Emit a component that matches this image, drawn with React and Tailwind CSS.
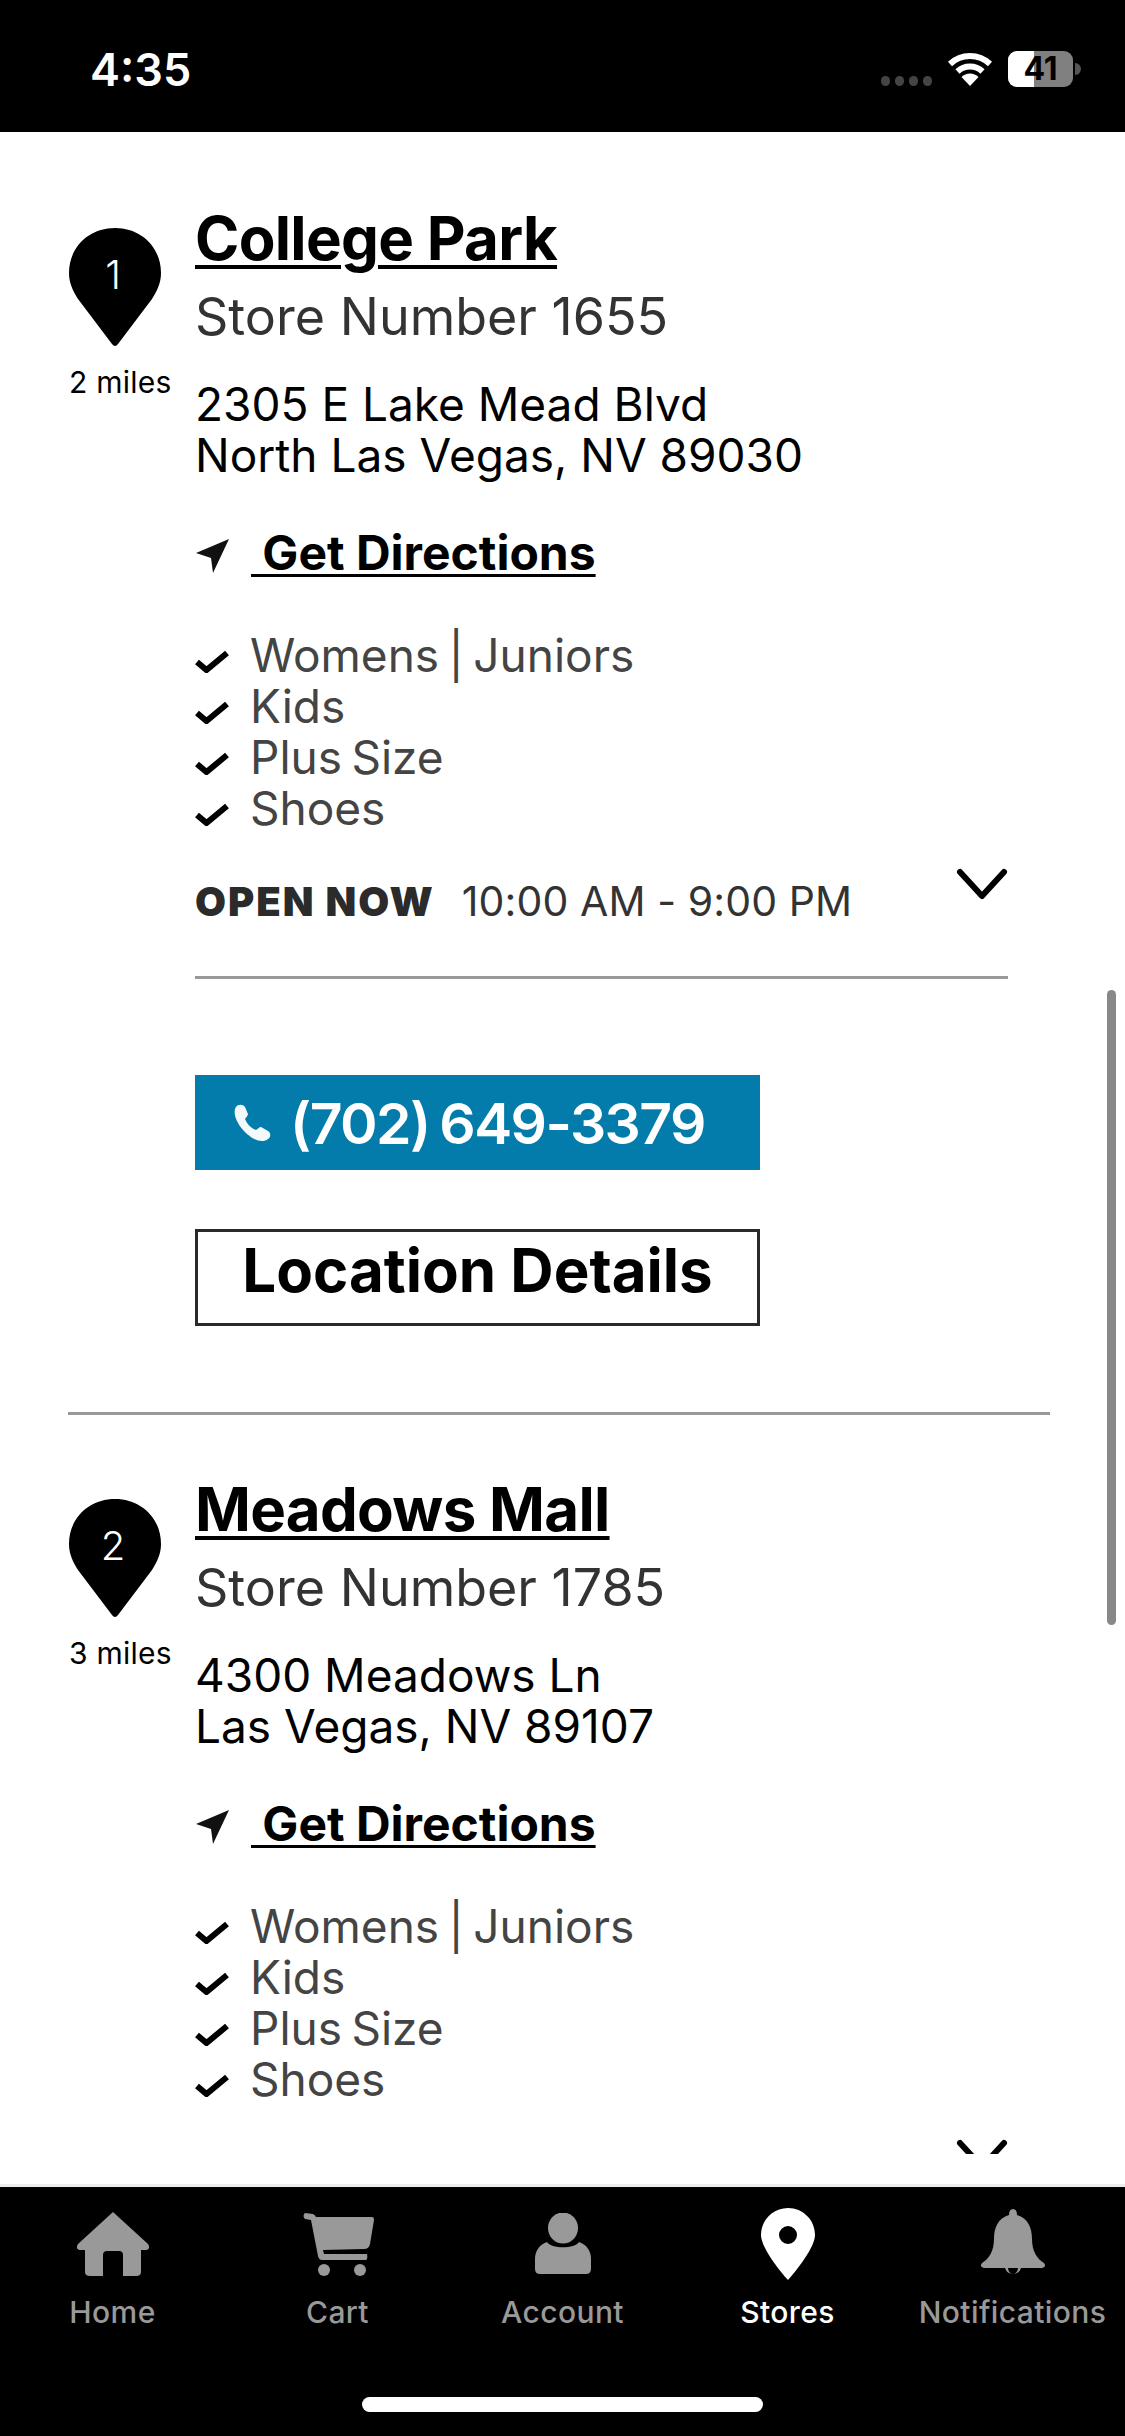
import React from "react";

const features = ["Womens | Juniors", "Kids", "Plus Size", "Shoes"];
const stores = [
  { n: 1, miles: "2 miles", name: "College Park", num: "Store Number 1655", a1: "2305 E Lake Mead Blvd", a2: "North Las Vegas, NV 89030" },
  { n: 2, miles: "3 miles", name: "Meadows Mall", num: "Store Number 1785", a1: "4300 Meadows Ln", a2: "Las Vegas, NV 89107" },
];

function Check() {
  return (
    <svg viewBox="0 0 34 24" className="w-[34px] h-[24px] shrink-0 mt-[8px]">
      <path d="M2 13 L11.5 21 L32 4" fill="none" stroke="#000" strokeWidth="6" />
    </svg>
  );
}

function Store({ s }) {
  return (
    <div className="mb-[62px]">
      <div className="flex">
        <div className="w-[127px] shrink-0 pt-[22px]">
          <div className="relative w-[92px] h-[119px] ml-[1px]">
            <svg viewBox="0 0 92 119" className="w-[92px] h-[119px]">
              <path d="M46 0C72 0 92 19 92 45C92 55 88 63 83 71L49 116Q46 120 43 116L9 71C4 63 0 55 0 45C0 19 20 0 46 0Z" fill="#000" />
            </svg>
            <div className="absolute left-0 right-[4px] top-[23px] text-center text-white text-[40px] leading-[48px] font-light">{s.n}</div>
          </div>
          <div className="mt-[18px] ml-[1px] text-[30px] leading-[34px] tracking-[0.25px] text-black whitespace-nowrap">{s.miles}</div>
        </div>
        <div className="flex-1 min-w-0">
          <div className="-mt-[1px] text-[60px] leading-[66px] font-bold text-black underline decoration-[4px] underline-offset-[5px] tracking-[-0.7px]">{s.name}</div>
          <div className="mt-[17px] text-[52px] leading-[58px] text-[#333]">{s.num}</div>
          <div className="mt-[33px] text-[46px] leading-[51px] text-black">
            <div>{s.a1}</div>
            <div>{s.a2}</div>
          </div>
          <div className="mt-[46px] flex items-center text-[48px] leading-[52px] font-bold text-black">
            <svg viewBox="0 0 34 34" className="w-[34px] h-[34px] shrink-0 ml-[1px] mr-[21px] mt-[6px]">
              <path d="M33 0 L0 14 L15 19 L17 34 Z" fill="#111" />
            </svg>
            <span className="underline decoration-[3px] underline-offset-[4px] whitespace-pre"> Get Directions</span>
          </div>
          <div className="mt-[52px]">
            {features.map((f) => (
              <div key={f} className="flex items-center h-[51px]">
                <Check />
                <span className="ml-[21px] -mt-[3px] text-[46px] leading-[51px] text-[#444] [word-spacing:-3.5px]">{f}</span>
              </div>
            ))}
          </div>
          <div className="mt-[42px] flex items-start justify-between text-[#2b2b2b]">
            <div className="flex items-baseline">
              <span className="font-black text-[40px] leading-[48px] tracking-[2px]">OPEN NOW</span>
              <span className="ml-[27px] text-[41px] leading-[48px] text-[#333] tracking-[0.1px]">10:00 AM - 9:00 PM</span>
            </div>
            <svg viewBox="0 0 56 36" className="w-[56px] h-[36px] -mt-[11px] mr-[-2px] shrink-0">
              <path d="M6 6 L28 30 L50 6" fill="none" stroke="#000" strokeWidth="6" strokeLinecap="round" strokeLinejoin="round" />
            </svg>
          </div>
          <div className="mt-[50px] h-[3px] bg-[#999]" />
          <div className="mt-[96px] w-[565px] h-[95px] bg-[#047cab] flex items-center text-white">
            <svg viewBox="0 0 38 38" className="ml-[38px] w-[38px] h-[38px] shrink-0">
              <path d="M3 3C5 0 10 0 12 3L15 10C15 12 13 13 12 15C14 20 18 24 23 26C25 25 26 23 28 23L35 27C38 29 38 33 35 35C30 39 22 37 14 30C4 21 -1 9 3 3Z" fill="#f4fafc" />
            </svg>
            <span className="ml-[19px] mt-[3px] text-[57px] leading-[66px] font-semibold tracking-[-1.6px] [word-spacing:-3px]">(702) 649-3379</span>
          </div>
          <div className="mt-[59px] w-[565px] h-[97px] border-[3px] border-[#2a2a2a] flex items-center justify-center pb-[16px] text-[60px] leading-[66px] font-bold text-black">
            Location Details
          </div>
        </div>
      </div>
      <div className="mt-[86px] w-[982px] h-[3px] bg-[#999]" />
    </div>
  );
}

function Tab({ label, active, children }) {
  return (
    <div className="flex flex-col items-center">
      <div className="h-[72px] flex items-center justify-center">{children}</div>
      <div className={`mt-[14px] text-[30px] leading-[36px] font-medium tracking-[0.4px] whitespace-nowrap ${active ? "text-white" : "text-[#999]"}`}>{label}</div>
    </div>
  );
}

export default function App() {
  return (
    <div className="w-[1125px] h-[2436px] overflow-hidden flex flex-col bg-white font-['Inter',sans-serif]">
      <div className="h-[132px] bg-black shrink-0 flex items-start relative">
        <div className="ml-[90px] mt-[43px] text-white text-[45px] leading-[54px] font-semibold">4:35</div>
        <div className="ml-auto mt-[51px] mr-[44px] flex items-start">
          <div className="flex gap-[5px] mt-[25px] mr-[15px]">
            <span className="w-[9px] h-[10px] rounded-full bg-[#444]" />
            <span className="w-[9px] h-[10px] rounded-full bg-[#444]" />
            <span className="w-[9px] h-[10px] rounded-full bg-[#444]" />
            <span className="w-[9px] h-[10px] rounded-full bg-[#444]" />
          </div>
          <svg viewBox="0 0 46 34" className="w-[46px] h-[34px] mr-[15px] mt-[1px]">
            <path d="M3 12 A29 29 0 0 1 43 12" fill="none" stroke="#fff" strokeWidth="6" />
            <path d="M10.5 19.5 A18 18 0 0 1 35.5 19.5" fill="none" stroke="#fff" strokeWidth="6" />
            <path d="M23 34 L14.5 25 A12 12 0 0 1 31.5 25 Z" fill="#fff" />
          </svg>
          <div className="relative w-[65px] h-[36px] rounded-[9px] overflow-hidden bg-[#808080] flex items-center justify-center">
            <div className="absolute left-0 top-0 bottom-0 w-[26px] bg-white" />
            <span className="relative text-black text-[32px] leading-[36px] font-bold">41</span>
          </div>
          <div className="w-[6px] h-[12px] mt-[12px] ml-[2px] rounded-r-full bg-[#555]" />
        </div>
      </div>

      <div className="relative flex-1 min-h-0 bg-white">
        <div className="h-[2022px] overflow-hidden pt-[74px] pl-[68px] pr-[117px]">
          {stores.map((s) => (
            <Store key={s.n} s={s} />
          ))}
        </div>
        <div className="absolute right-[9px] top-[858px] w-[9px] h-[635px] rounded-full bg-[#888]" />
      </div>

      <div className="h-[3px] bg-[#eee] shrink-0" />
      <div className="h-[249px] bg-black shrink-0 pt-[21px] flex flex-col">
        <div className="grid grid-cols-5">
          <Tab label="Home">
            <svg viewBox="0 0 74 64" className="w-[74px] h-[64px]">
              <path d="M37 0 L72 32 Q75 37 70 38 L65 38 L65 60 Q65 64 60 64 L47 64 L47 43 Q47 39 43 39 L31 39 Q27 39 27 43 L27 64 L14 64 Q9 64 9 60 L9 38 L4 38 Q-1 37 2 32 Z" fill="#999" />
            </svg>
          </Tab>
          <Tab label="Cart">
            <svg viewBox="0 0 72 64" className="w-[72px] h-[64px]">
              <path d="M3 1 L11 2 Q13 3 14 5 L70 5 Q72 5 72 8 L68 32 Q67 37 62 37 L21 38 L22 42 L65 42 Q66 47 64 48 L20 48 Q17 48 16 44 L9 8 L3 7 Q0 4 3 1 Z" fill="#999" />
              <ellipse cx="22" cy="58" rx="6" ry="6" fill="#999" />
              <ellipse cx="58" cy="58" rx="6" ry="6" fill="#999" />
            </svg>
          </Tab>
          <Tab label="Account">
            <svg viewBox="0 0 56 62" className="w-[56px] h-[62px]">
              <ellipse cx="28" cy="15" rx="15" ry="15.5" fill="#999" />
              <path d="M12 29 C16 36 40 36 44 29 C52 32 56 38 56 46 L56 56 Q56 61 51 61 L5 61 Q0 61 0 56 L0 46 C0 38 4 32 12 29 Z" fill="#999" />
            </svg>
          </Tab>
          <Tab label="Stores" active>
            <svg viewBox="0 0 54 72" className="w-[54px] h-[72px]">
              <path fillRule="evenodd" d="M27 0C42 0 54 12 54 27C54 39 36 62 27 72C18 62 0 39 0 27C0 12 12 0 27 0ZM27 18A9 9 0 1 0 27 36A9 9 0 1 0 27 18Z" fill="#fff" />
            </svg>
          </Tab>
          <Tab label="Notifications">
            <svg viewBox="0 0 66 70" className="w-[66px] h-[70px]">
              <path d="M33 0Q37 0 37 6C48 9 52 19 52 30C52 42 57 50 64 54Q67 58 62 59L4 59Q-1 58 2 54C9 50 14 42 14 30C14 19 18 9 29 6Q29 0 33 0Z" fill="#999" />
              <path d="M25 59 A8.5 9 0 0 0 41 59 L38 59 A5 6 0 0 1 28 59Z" fill="#999" />
            </svg>
          </Tab>
        </div>
        <div className="mt-[67px] mx-auto w-[401px] h-[15px] rounded-[8px] bg-white" />
      </div>
    </div>
  );
}
